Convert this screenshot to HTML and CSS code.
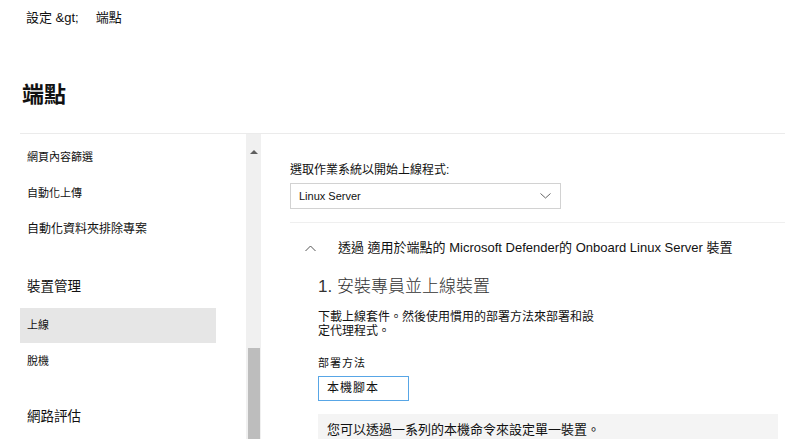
FILE: index.html
```html
<!DOCTYPE html>
<html lang="zh-Hant">
<head>
    <meta charset="UTF-8">
    <meta name="viewport" content="width=device-width, initial-scale=1.0">
    <title>端點</title>
    <link rel="stylesheet" href="styles.css">
</head>
<body>
    <header class="top">
        <nav class="crumbs">
            <span>設定 &amp;gt;</span>
            <span class="crumb-current">端點</span>
        </nav>
        <h1 class="title">端點</h1>
    </header>

    <div class="layout">
        <aside class="side">
            <ul class="side-nav">
                <li class="nav-item small">網頁內容篩選</li>
                <li class="nav-item small">自動化上傳</li>
                <li class="nav-item">自動化資料夾排除專案</li>
                <li class="nav-group">裝置管理</li>
                <li class="nav-item small active">上線</li>
                <li class="nav-item small">脫機</li>
                <li class="nav-group second">網路評估</li>
            </ul>
            <div class="scrollbar">
                <span class="scroll-up"></span>
                <span class="scroll-thumb"></span>
            </div>
        </aside>

        <main class="panel">
            <label class="field-label">選取作業系統以開始上線程式:</label>
            <div class="select">
                <span>Linux Server</span>
                <svg class="select-arrow" width="11" height="6" viewBox="0 0 11 6">
                    <polyline points="0.5,0.5 5.5,5 10.5,0.5" fill="none" stroke="#666" stroke-width="1"/>
                </svg>
            </div>

            <div class="divider"></div>

            <div class="section-head">
                <svg class="collapse" width="11" height="7" viewBox="0 0 11 7">
                    <polyline points="0.5,6 5.5,1 10.5,6" fill="none" stroke="#555" stroke-width="1"/>
                </svg>
                <span>透過 適用於端點的 Microsoft Defender的 Onboard Linux Server 裝置</span>
            </div>

            <div class="step">
                <h2 class="step-title">1. 安裝專員並上線裝置</h2>
                <p class="step-text">下載上線套件。然後使用慣用的部署方法來部署和設定代理程式。</p>
                <div class="small-label">部署方法</div>
                <div class="method">本機腳本</div>
                <div class="note">您可以透過一系列的本機命令來設定單一裝置。</div>
            </div>
        </main>
    </div>
</body>
</html>
```

FILE: styles.css
```css
* { margin: 0; padding: 0; box-sizing: border-box; }
html, body { height: 100%; overflow: hidden; }
body {
    font-family: "Liberation Sans", "Noto Sans CJK TC", sans-serif;
    color: #111;
    background: #fff;
}

.top { padding: 10px 0 0 26px; }
.crumbs { display: flex; gap: 17px; font-size: 13px; line-height: 16px; }
.title {
    margin: 54px 0 0 -4px;
    font-size: 22px;
    line-height: 30px;
    font-weight: 600;
}

.layout {
    display: flex;
    margin: 23px 0 0 20px;
    height: 306px;
    border-top: 1px solid #ebebeb;
}

.side { display: flex; width: 242px; flex-shrink: 0; }
.side-nav { list-style: none; width: 196px; padding-top: 5px; }
.nav-item {
    height: 36px;
    line-height: 36px;
    padding-left: 7px;
    font-size: 12px;
}
.nav-item.small { font-size: 11px; }
.nav-item.active { background: #e6e6e6; height: 35px; line-height: 35px; }
.nav-group {
    margin: 24px 0 5px;
    padding-left: 7px;
    font-size: 13.5px;
    line-height: 32px;
}
.nav-group.second { margin-top: 22px; }

.scrollbar {
    display: flex;
    flex-direction: column;
    align-items: center;
    width: 15px;
    margin-left: 30px;
    background: #f0f0f0;
}
.scroll-up {
    margin-top: 16px;
    width: 0; height: 0;
    border-left: 4px solid transparent;
    border-right: 4px solid transparent;
    border-bottom: 4px solid #5f5f5f;
}
.scroll-thumb {
    margin-top: auto;
    width: 12px;
    height: 91px;
    background: #bdbdbd;
}

.panel { flex: 1; padding: 27px 0 0 28px; }
.field-label { display: block; font-size: 12px; line-height: 18px; }
.select {
    display: flex;
    align-items: center;
    justify-content: space-between;
    width: 271px;
    height: 26px;
    margin-top: 4px;
    padding: 0 9px 0 8px;
    border: 1px solid #d2d2d2;
    font-size: 11px;
}
.divider { margin-top: 13px; border-top: 1px solid #efefef; }

.section-head {
    display: flex;
    align-items: center;
    gap: 22px;
    margin-top: 15px;
    padding-left: 15px;
    font-size: 13px;
    line-height: 20px;
}

.step { padding-left: 28px; margin-right: 7px; }
.step-title {
    margin-top: 17px;
    font-size: 17px;
    line-height: 24px;
    font-weight: 300;
    color: #333;
}
.step-text {
    max-width: 280px;
    margin-top: 11px;
    font-size: 12px;
    line-height: 14px;
}
.small-label { margin-top: 18px; font-size: 11px; line-height: 14px; letter-spacing: 1px; }
.method {
    width: 91px;
    height: 25px;
    margin-top: 6px;
    padding-left: 8px;
    border: 1px solid #58a6e6;
    font-size: 12px;
    line-height: 23px;
    letter-spacing: 1px;
}
.note {
    margin-top: 13px;
    height: 40px;
    padding: 8px 0 0 9px;
    background: #f4f4f4;
    font-size: 13px;
    line-height: 16px;
}
```
